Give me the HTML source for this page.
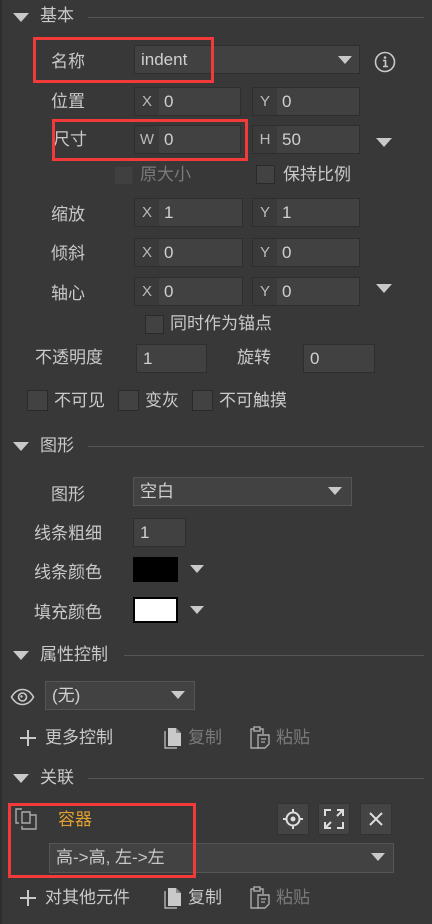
<!DOCTYPE html>
<html><head><meta charset="utf-8">
<style>
*{margin:0;padding:0;box-sizing:border-box}
body{width:432px;height:924px;background:#383838;position:relative;overflow:hidden;font-family:"Liberation Sans","Noto Sans CJK SC",sans-serif;font-size:17px;color:#c9c9c9}
.a{position:absolute}
.t{position:absolute;line-height:20px;white-space:nowrap}
.tri{position:absolute;width:0;height:0;border-left:8px solid transparent;border-right:8px solid transparent;border-top:9px solid #c9c9c9}
.tri.s{border-left-width:7px;border-right-width:7px;border-top-width:8px}
.line{position:absolute;height:1px;background:#555}
.fld{position:absolute;background:#414141;border:1px solid #2e2e2e;height:29px;line-height:27px;padding-left:6px;font-size:17px;color:#d0d0d0}
.pair{position:absolute;height:29px;border:1px solid #2e2e2e;background:#3a3a3a}
.pair .l{position:absolute;left:0;top:0;width:24px;height:27px;line-height:27px;text-align:center;font-size:15px;color:#bbb}
.pair .v{position:absolute;left:24px;right:0;top:0;height:27px;background:#414141;line-height:27px;padding-left:5px;color:#d0d0d0}
.cb{position:absolute;width:19px;height:19px;background:#424242;border:1px solid #2a2a2a}
.red{position:absolute;border:3px solid #f23a3a}
.btn{position:absolute;width:32px;height:32px;background:#444;border:1px solid #333}
.dis{color:#7a7a7a}
</style></head><body>
<div class="a" style="left:0;top:0;width:2px;height:924px;background:#2e2e2e"></div>

<div class="tri" style="left:13px;top:13px"></div>
<div class="t" style="left:40px;top:6px">基本</div>
<div class="line" style="left:88px;top:17px;width:336px"></div>

<div class="t" style="left:51px;top:52px">名称</div>
<div class="fld" style="left:134px;top:45px;width:226px">indent</div>
<div class="tri s" style="left:338px;top:56px"></div>
<svg class="a" style="left:374px;top:51px" width="22" height="22" viewBox="0 0 22 22"><circle cx="11" cy="11" r="9.5" fill="none" stroke="#c9c9c9" stroke-width="1.6"/><circle cx="11" cy="6.5" r="1.3" fill="#c9c9c9"/><path d="M9 9.5h2.5v6M9 15.5h5" stroke="#c9c9c9" stroke-width="1.6" fill="none"/></svg>
<div class="red" style="left:33px;top:37px;width:181px;height:46px"></div>

<div class="t" style="left:51px;top:92px">位置</div>
<div class="pair" style="left:134px;top:87px;width:107px"><div class="l">X</div><div class="v">0</div></div>
<div class="pair" style="left:252px;top:87px;width:108px"><div class="l">Y</div><div class="v">0</div></div>

<div class="t" style="left:53px;top:130px">尺寸</div>
<div class="pair" style="left:134px;top:125px;width:107px"><div class="l">W</div><div class="v">0</div></div>
<div class="pair" style="left:252px;top:125px;width:108px"><div class="l">H</div><div class="v">50</div></div>
<div class="tri" style="left:376px;top:138px"></div>
<div class="red" style="left:52px;top:119px;width:196px;height:42px"></div>

<div class="cb" style="left:114px;top:166px;border-color:#3a3a3a;background:#404040"></div>
<div class="t dis" style="left:140px;top:165px">原大小</div>
<div class="cb" style="left:256px;top:165px"></div>
<div class="t" style="left:283px;top:165px">保持比例</div>

<div class="t" style="left:51px;top:205px">缩放</div>
<div class="pair" style="left:134px;top:198px;width:109px"><div class="l">X</div><div class="v">1</div></div>
<div class="pair" style="left:252px;top:198px;width:108px"><div class="l">Y</div><div class="v">1</div></div>

<div class="t" style="left:51px;top:244px">倾斜</div>
<div class="pair" style="left:134px;top:238px;width:109px"><div class="l">X</div><div class="v">0</div></div>
<div class="pair" style="left:252px;top:238px;width:108px"><div class="l">Y</div><div class="v">0</div></div>

<div class="t" style="left:51px;top:284px">轴心</div>
<div class="pair" style="left:134px;top:277px;width:109px"><div class="l">X</div><div class="v">0</div></div>
<div class="pair" style="left:252px;top:277px;width:108px"><div class="l">Y</div><div class="v">0</div></div>
<div class="tri" style="left:376px;top:284px"></div>

<div class="cb" style="left:145px;top:315px"></div>
<div class="t" style="left:170px;top:314px">同时作为锚点</div>

<div class="t" style="left:35px;top:348px">不透明度</div>
<div class="fld" style="left:136px;top:344px;width:71px">1</div>
<div class="t" style="left:237px;top:348px">旋转</div>
<div class="fld" style="left:303px;top:344px;width:72px">0</div>

<div class="cb" style="left:27px;top:390px;width:21px;height:21px"></div>
<div class="t" style="left:54px;top:391px">不可见</div>
<div class="cb" style="left:118px;top:390px;width:21px;height:21px"></div>
<div class="t" style="left:145px;top:391px">变灰</div>
<div class="cb" style="left:192px;top:390px;width:21px;height:21px"></div>
<div class="t" style="left:219px;top:391px">不可触摸</div>

<div class="tri" style="left:13px;top:442px"></div>
<div class="t" style="left:40px;top:436px">图形</div>
<div class="line" style="left:88px;top:446px;width:336px"></div>

<div class="t" style="left:51px;top:485px">图形</div>
<div class="fld" style="left:133px;top:477px;width:219px;border-color:#555;background:#424242">空白</div>
<div class="tri s" style="left:328px;top:487px"></div>

<div class="t" style="left:34px;top:524px">线条粗细</div>
<div class="fld" style="left:133px;top:518px;width:53px">1</div>

<div class="t" style="left:34px;top:563px">线条颜色</div>
<div class="a" style="left:133px;top:557px;width:45px;height:25px;background:#000"></div>
<div class="tri s" style="left:190px;top:565px"></div>

<div class="t" style="left:34px;top:603px">填充颜色</div>
<div class="a" style="left:133px;top:597px;width:45px;height:26px;background:#fff;border:2px solid #000"></div>
<div class="tri s" style="left:190px;top:606px"></div>

<div class="tri" style="left:13px;top:651px"></div>
<div class="t" style="left:40px;top:645px">属性控制</div>
<div class="line" style="left:124px;top:655px;width:300px"></div>

<svg class="a" style="left:10px;top:688px" width="25" height="18" viewBox="0 0 25 18"><path d="M1.5 9C5 3 9 1.5 12.5 1.5S20 3 23.5 9C20 15 16 16.5 12.5 16.5S5 15 1.5 9Z" fill="none" stroke="#c9c9c9" stroke-width="1.6"/><circle cx="12.5" cy="9" r="4" fill="none" stroke="#c9c9c9" stroke-width="1.6"/><circle cx="11.5" cy="8.5" r="1.2" fill="#c9c9c9"/></svg>
<div class="fld" style="left:45px;top:681px;width:150px;border-color:#555;background:#424242">(无)</div>
<div class="tri s" style="left:171px;top:691px"></div>

<svg class="a" style="left:20px;top:730px" width="16" height="16"><path d="M8 0v16M0 8h16" stroke="#c9c9c9" stroke-width="2"/></svg>
<div class="t" style="left:45px;top:728px">更多控制</div>
<svg class="a" style="left:164px;top:727px" width="18" height="22" viewBox="0 0 18 22"><path d="M1 4v17h12" fill="none" stroke="#c9c9c9" stroke-width="1.2"/><path d="M4 1h8l5 5v13H4Z" fill="#c9c9c9"/><path d="M12 1v5h5" fill="#888"/></svg>
<div class="t dis" style="left:188px;top:728px">复制</div>
<svg class="a" style="left:250px;top:726px" width="20" height="24" viewBox="0 0 20 24"><path d="M4 3H1v19h8" fill="none" stroke="#aaa" stroke-width="1.4"/><path d="M10 3h3v5" fill="none" stroke="#aaa" stroke-width="1.4"/><rect x="4" y="1" width="6" height="4" fill="none" stroke="#aaa" stroke-width="1.4"/><path d="M8 9h11v9l-4 4H8Z" fill="none" stroke="#aaa" stroke-width="1.4"/><path d="M11 13h5M11 16h4" stroke="#aaa" stroke-width="1.2"/></svg>
<div class="t dis" style="left:276px;top:728px">粘贴</div>

<div class="tri" style="left:13px;top:774px"></div>
<div class="t" style="left:40px;top:768px">关联</div>
<div class="line" style="left:88px;top:778px;width:336px"></div>

<svg class="a" style="left:15px;top:808px" width="22" height="22" viewBox="0 0 22 22"><path d="M7 1H1v14h3M15 7h6v14H7v-3" fill="none" stroke="#aaa" stroke-width="1.4"/><path d="M7 4h8v11H7Z" fill="none" stroke="#aaa" stroke-width="1.4"/></svg>
<div class="t" style="left:58px;top:810px;color:#e0a030">容器</div>
<div class="btn" style="left:277px;top:803px"></div>
<svg class="a" style="left:281px;top:807px" width="24" height="24" viewBox="0 0 24 24"><circle cx="12" cy="12" r="6.5" fill="none" stroke="#ddd" stroke-width="2"/><circle cx="12" cy="12" r="2.5" fill="#ddd"/><path d="M12 2v4M12 18v4M2 12h4M18 12h4" stroke="#ddd" stroke-width="2"/></svg>
<div class="btn" style="left:318px;top:803px"></div>
<svg class="a" style="left:322px;top:807px" width="24" height="24" viewBox="0 0 24 24"><path d="M3 9V3h6M21 9V3h-6M3 15v6h6M21 15v6h-6M15 9l5-5M9 15l-5 5" fill="none" stroke="#ddd" stroke-width="2"/></svg>
<div class="btn" style="left:360px;top:803px"></div>
<svg class="a" style="left:364px;top:807px" width="24" height="24" viewBox="0 0 24 24"><path d="M6 6l12 12M18 6L6 18" stroke="#ddd" stroke-width="2"/></svg>
<div class="fld" style="left:49px;top:843px;width:345px;height:30px;border-color:#555;background:#424242;line-height:28px;color:#c9c9c9">高-&gt;高, 左-&gt;左</div>
<div class="tri s" style="left:371px;top:853px"></div>
<div class="red" style="left:8px;top:803px;width:188px;height:75px"></div>

<svg class="a" style="left:20px;top:890px" width="16" height="16"><path d="M8 0v16M0 8h16" stroke="#c9c9c9" stroke-width="2"/></svg>
<div class="t" style="left:45px;top:888px">对其他元件</div>
<svg class="a" style="left:164px;top:887px" width="18" height="22" viewBox="0 0 18 22"><path d="M1 4v17h12" fill="none" stroke="#c9c9c9" stroke-width="1.2"/><path d="M4 1h8l5 5v13H4Z" fill="#c9c9c9"/><path d="M12 1v5h5" fill="#888"/></svg>
<div class="t" style="left:188px;top:888px">复制</div>
<svg class="a" style="left:250px;top:886px" width="20" height="24" viewBox="0 0 20 24"><path d="M4 3H1v19h8" fill="none" stroke="#aaa" stroke-width="1.4"/><path d="M10 3h3v5" fill="none" stroke="#aaa" stroke-width="1.4"/><rect x="4" y="1" width="6" height="4" fill="none" stroke="#aaa" stroke-width="1.4"/><path d="M8 9h11v9l-4 4H8Z" fill="none" stroke="#aaa" stroke-width="1.4"/><path d="M11 13h5M11 16h4" stroke="#aaa" stroke-width="1.2"/></svg>
<div class="t dis" style="left:276px;top:888px">粘贴</div>
</body></html>
